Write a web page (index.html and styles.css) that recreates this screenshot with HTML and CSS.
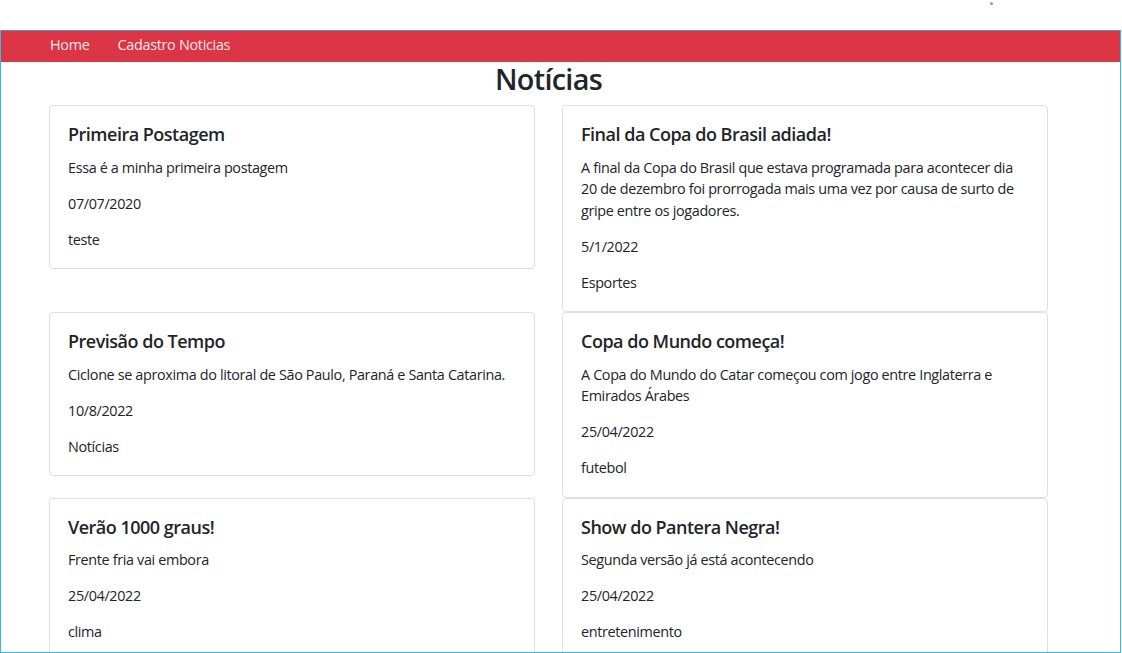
FILE: index.html
```html
<!DOCTYPE html>
<html lang="pt-BR">
<head>
<meta charset="utf-8">
<title>Notícias</title>
<link rel="stylesheet" href="styles.css">
</head>
<body>
<div class="topbar"><span class="dot"></span></div>
<div class="frame">
  <nav class="navbar">
    <a href="#" class="nav-link">Home</a>
    <a href="#" class="nav-link">Cadastro Noticias</a>
  </nav>
  <main class="container">
    <h2 class="page-title">Notícias</h2>
    <div class="grid">
      <div class="card">
        <h5 class="card-title">Primeira Postagem</h5>
        <p class="card-text">Essa é a minha primeira postagem</p>
        <p class="card-text">07/07/2020</p>
        <p class="card-text">teste</p>
      </div>
      <div class="card">
        <h5 class="card-title">Final da Copa do Brasil adiada!</h5>
        <p class="card-text">A final da Copa do Brasil que estava programada para acontecer dia 20 de dezembro foi prorrogada mais uma vez por causa de surto de gripe entre os jogadores.</p>
        <p class="card-text">5/1/2022</p>
        <p class="card-text">Esportes</p>
      </div>
      <div class="card">
        <h5 class="card-title">Previsão do Tempo</h5>
        <p class="card-text">Ciclone se aproxima do litoral de São Paulo, Paraná e Santa Catarina.</p>
        <p class="card-text">10/8/2022</p>
        <p class="card-text">Notícias</p>
      </div>
      <div class="card">
        <h5 class="card-title">Copa do Mundo começa!</h5>
        <p class="card-text">A Copa do Mundo do Catar começou com jogo entre Inglaterra e Emirados Árabes</p>
        <p class="card-text">25/04/2022</p>
        <p class="card-text">futebol</p>
      </div>
      <div class="card">
        <h5 class="card-title">Verão 1000 graus!</h5>
        <p class="card-text">Frente fria vai embora</p>
        <p class="card-text">25/04/2022</p>
        <p class="card-text">clima</p>
      </div>
      <div class="card">
        <h5 class="card-title">Show do Pantera Negra!</h5>
        <p class="card-text">Segunda versão já está acontecendo</p>
        <p class="card-text">25/04/2022</p>
        <p class="card-text">entretenimento</p>
      </div>
    </div>
  </main>
</div>
</body>
</html>
```
FILE: styles.css
```css
* { box-sizing: border-box; }
html, body { margin: 0; padding: 0; background: #fff; }
body {
  font-family: "Open Sans", "Noto Sans", sans-serif;
  font-size: 14.4px;
  line-height: 21.6px;
  letter-spacing: -0.35px;
  color: #212529;
  overflow: hidden;
}
.topbar {
  height: 30px;
  position: relative;
}
.dot {
  position: absolute;
  left: 990px;
  top: 2px;
  width: 3px;
  height: 3px;
  border-radius: 50%;
  background: #9a9a9a;
}
.frame {
  width: 1121px;
  height: 623px;
  border: 1px solid #25c6dd;
  border-top-color: #5e8fae;
  overflow: hidden;
}
.navbar {
  height: 31px;
  background: #dc3545;
  display: flex;
  align-items: center;
  gap: 28px;
  padding-left: 49px;
  padding-bottom: 3px;
}
.nav-link {
  color: rgba(255, 255, 255, 0.92);
  text-decoration: none;
  font-size: 14.4px;
  letter-spacing: -0.3px;
}
.container {
  margin-left: 48px;
  width: 999px;
}
.page-title {
  margin: 0 0 8.6px;
  text-align: center;
  font-size: 28.8px;
  line-height: 34.6px;
  font-weight: 600;
  letter-spacing: -0.7px;
}
.grid {
  display: grid;
  grid-template-columns: 486px 486px;
  column-gap: 27px;
  align-items: start;
}
.card {
  border: 1px solid #dfdfdf;
  border-radius: 4px;
  padding: 18px 18px;
}
.card-title {
  margin: 0 0 10.8px;
  font-size: 18px;
  line-height: 21.6px;
  font-weight: 600;
  letter-spacing: -0.5px;
}
.card-text {
  margin: 0 0 14.4px;
}
.card-text:last-child { margin-bottom: 0; }
```
